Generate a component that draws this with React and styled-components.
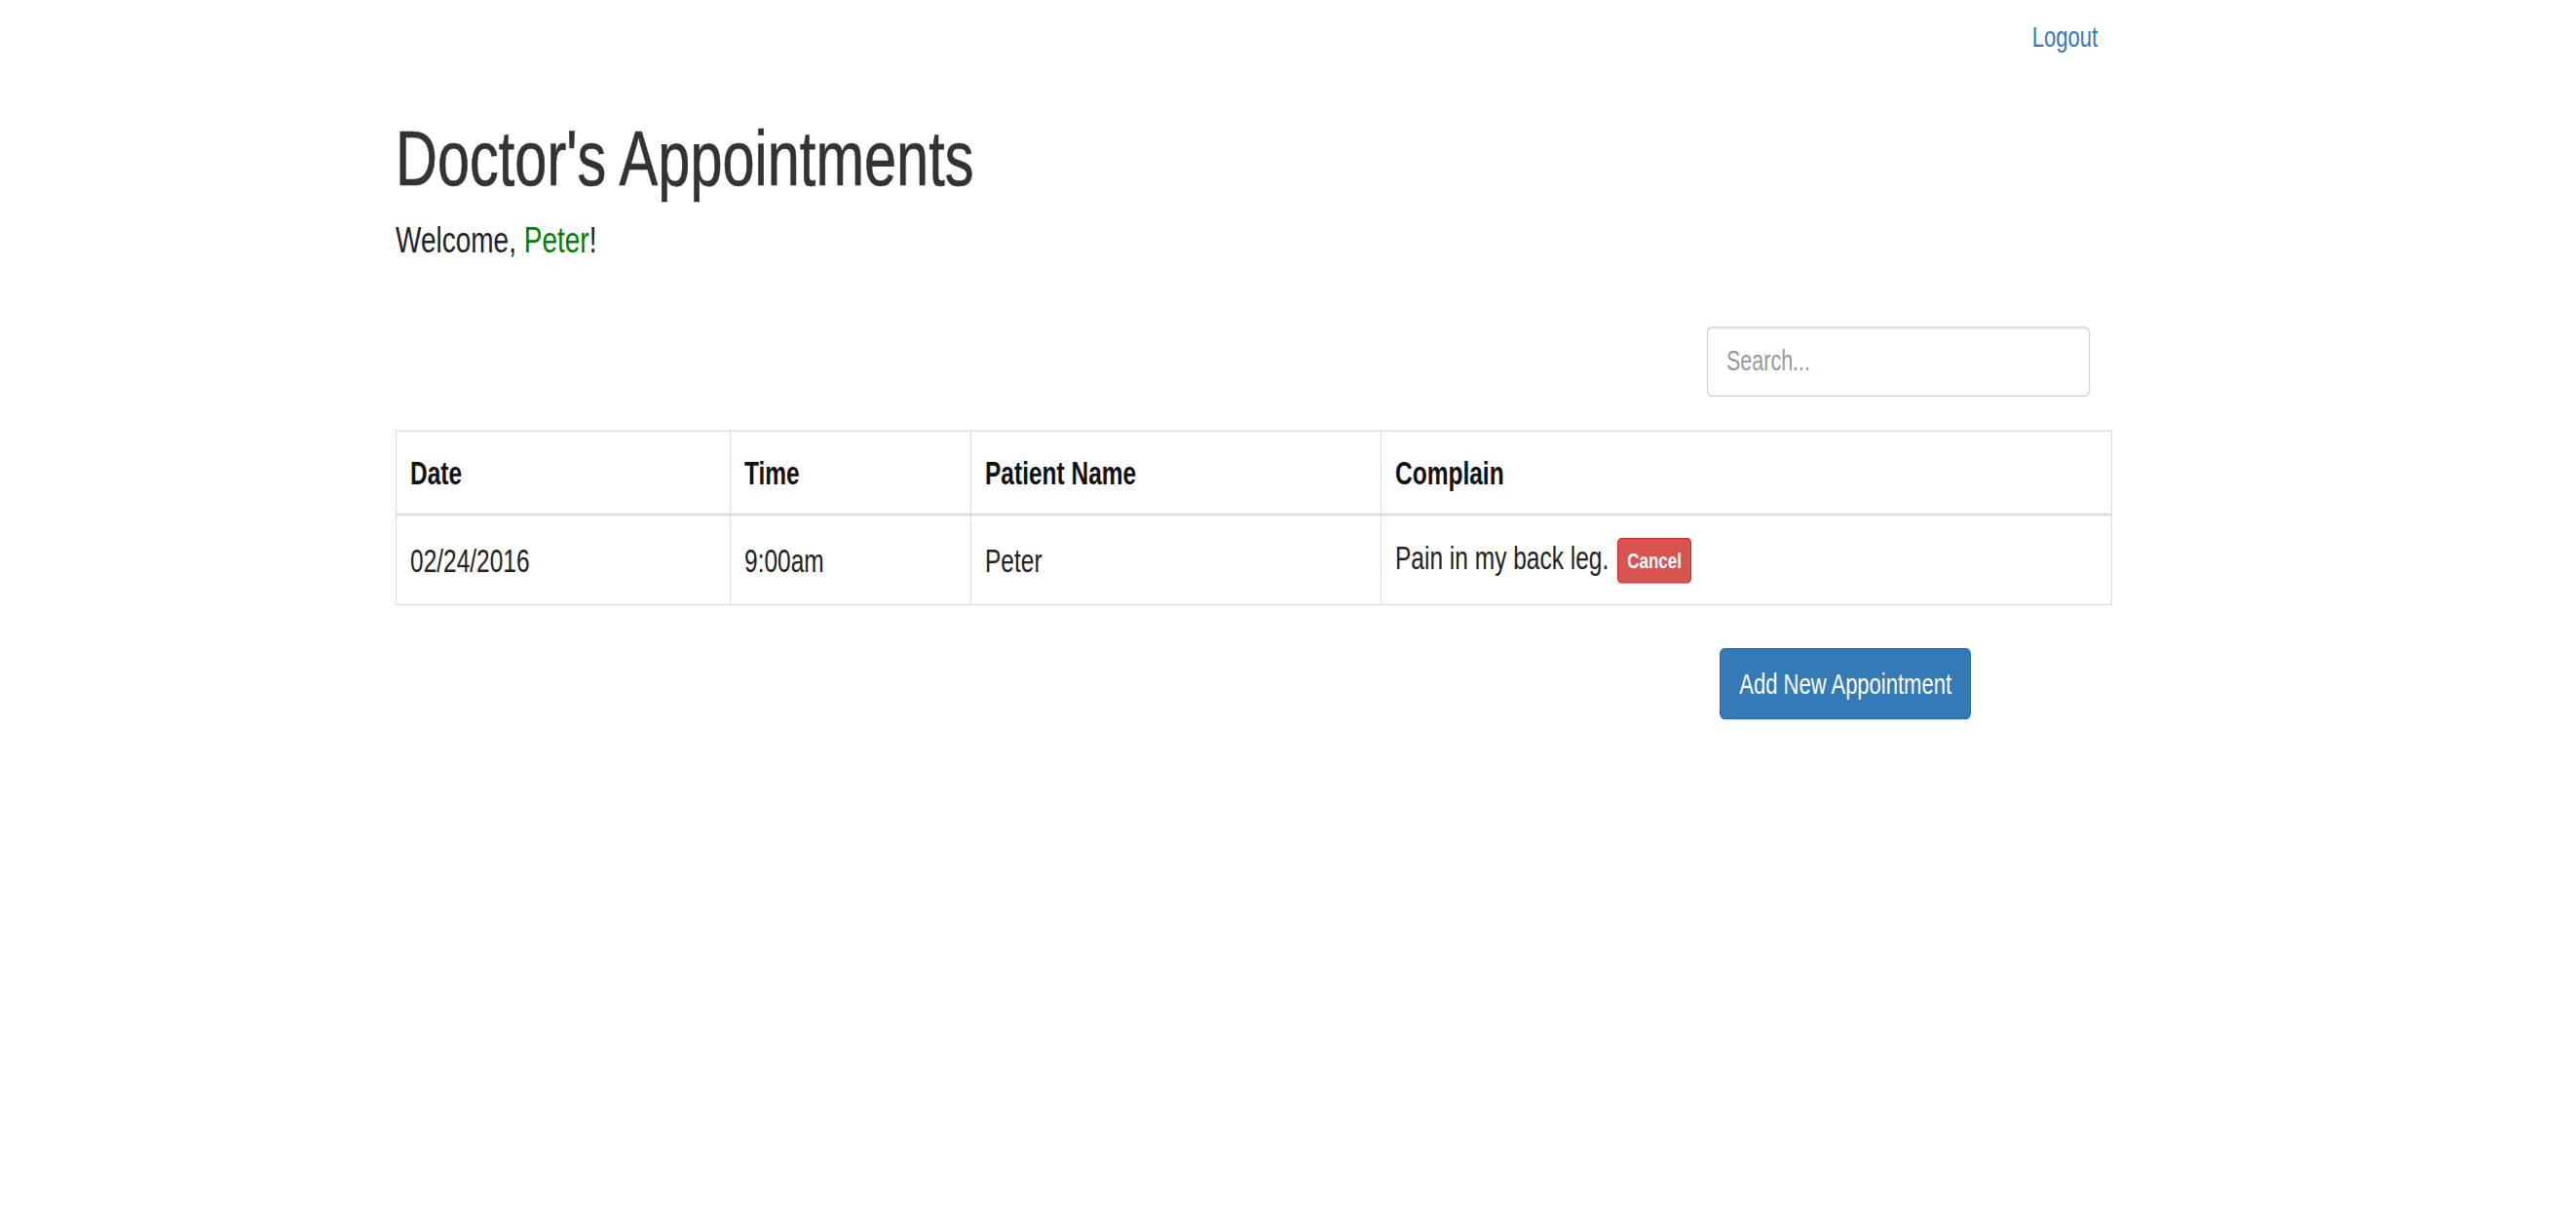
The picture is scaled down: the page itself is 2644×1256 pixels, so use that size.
import styled, { createGlobalStyle } from 'styled-components'

// the reference is a retina shot squeezed sideways, so the page is laid out
// at its real width and stretched on the vertical axis only
const STRETCH = 1.33;

const GlobalStyle = createGlobalStyle`
  body {
    margin: 0;
    background: #fff;
    color: #333;
    font-family: "Liberation Sans", Arial, sans-serif;
  }
`;

const Screen = styled.div`
  min-height: 100vh;
`;

const Page = styled.div`
  transform: scaleY(${STRETCH});
  transform-origin: top left;
`;

const Container = styled.div`
  width: 1762px;
  margin-left: 406px;
`;

const TopBar = styled.div`
  display: flex;
  justify-content: flex-end;
  padding: 17px 15px 0 0;
`;
const NavLink = styled.a`
  font-size: 22px;
  line-height: 24px;
  color: #337ab7;
  text-decoration: none;
  cursor: pointer;
`;

const Title = styled.h1`
  margin: 50px 0 0;
  font-size: 59.5px;
  line-height: 64px;
  font-weight: 400;
  color: #333;
  -webkit-text-stroke: 0.5px #333;
`;
const Welcome = styled.p`
  margin: 15px 0 0;
  font-size: 28px;
  line-height: 32px;
  color: #222;
`;
const UserName = styled.span`
  color: green;
`;

const SearchRow = styled.div`
  display: flex;
  justify-content: flex-end;
  margin-top: 50px;
  padding-right: 23px;
`;
const SearchInput = styled.input`
  box-sizing: border-box;
  width: 393px;
  height: 54px;
  padding: 0 19px;
  border: 1px solid #ccc;
  border-radius: 5px;
  box-shadow: inset 0 1px 1px rgba(0, 0, 0, 0.075);
  font-family: inherit;
  font-size: 21.5px;
  color: #555;
  outline: none;
  &::placeholder {
    color: #999;
  }
`;

const Table = styled.table`
  width: 100%;
  margin-top: 26px;
  table-layout: fixed;
  border-collapse: collapse;
  border: 1px solid #ddd;
  font-size: 24.5px;
  line-height: 28px;
`;
const HeadCell = styled.th`
  box-sizing: border-box;
  width: ${props => props.$width ? `${props.$width}px` : 'auto'};
  height: 64px;
  padding: 4px 14px 0;
  text-align: left;
  vertical-align: middle;
  font-weight: 700;
  color: #111;
  border: 1px solid #ddd;
  border-bottom: 2px solid #ddd;
`;
const Cell = styled.td`
  height: 66.5px;
  padding: 2px 14px 0;
  vertical-align: middle;
  color: #222;
  border: 1px solid #ddd;
`;
const Badge = styled.span`
  display: inline-flex;
  align-items: center;
  box-sizing: border-box;
  height: 35px;
  margin-left: 9px;
  padding: 0 9px;
  vertical-align: middle;
  background: #d9534f;
  border: 1px solid #c9302c;
  border-radius: 4px;
  color: #fff;
  font-size: 17px;
  font-weight: 700;
`;

const ActionRow = styled.div`
  display: flex;
  justify-content: flex-end;
  margin-top: 33px;
  padding-right: 145px;
`;
const Button = styled.button`
  box-sizing: border-box;
  height: 55px;
  padding: 0 19px;
  background: #337ab7;
  border: 1px solid #2e6da4;
  border-radius: 5px;
  color: #fff;
  font-family: inherit;
  font-size: 22px;
  cursor: pointer;
`;

const appointments = [
  { date: '02/24/2016', time: '9:00am', patient: 'Peter', complain: 'Pain in my back leg.' },
];

export default function App() {
  return (
    <Screen>
      <GlobalStyle />
      <Page>
        <Container>
          <TopBar>
            <NavLink>Logout</NavLink>
          </TopBar>
          <Title>Doctor's Appointments</Title>
          <Welcome>Welcome, <UserName>Peter</UserName>!</Welcome>
          <SearchRow>
            <SearchInput placeholder="Search..." />
          </SearchRow>
          <Table>
            <thead>
              <tr>
                <HeadCell $width={343}>Date</HeadCell>
                <HeadCell $width={247}>Time</HeadCell>
                <HeadCell $width={421}>Patient Name</HeadCell>
                <HeadCell>Complain</HeadCell>
              </tr>
            </thead>
            <tbody>
              {appointments.map(a => (
                <tr key={a.date + a.time}>
                  <Cell>{a.date}</Cell>
                  <Cell>{a.time}</Cell>
                  <Cell>{a.patient}</Cell>
                  <Cell>{a.complain}<Badge>Cancel</Badge></Cell>
                </tr>
              ))}
            </tbody>
          </Table>
          <ActionRow>
            <Button>Add New Appointment</Button>
          </ActionRow>
        </Container>
      </Page>
    </Screen>
  )
}
